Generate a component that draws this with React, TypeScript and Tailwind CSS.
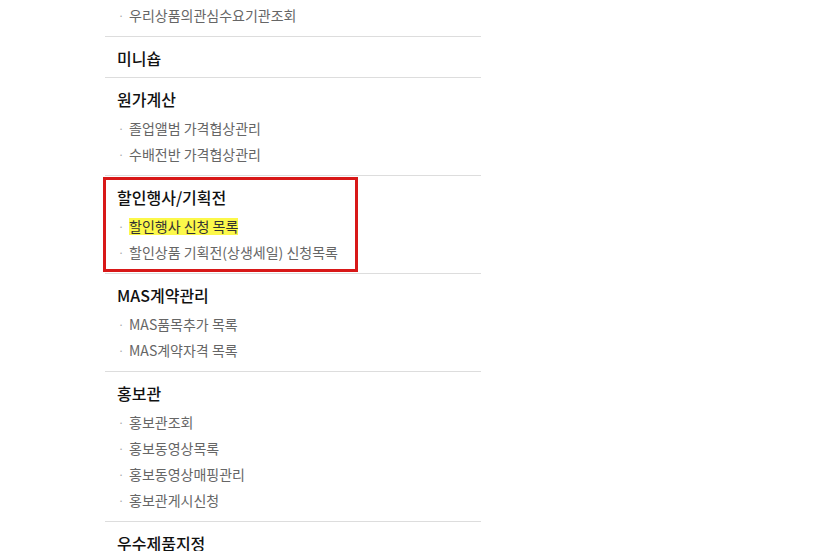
const sections = [
    { title: '미니숍', items: [] as string[] },
    { title: '원가계산', items: ['졸업앨범 가격협상관리', '수배전반 가격협상관리'] },
    { title: '할인행사/기획전', items: ['할인행사 신청 목록', '할인상품 기획전(상생세일) 신청목록'], marked: true },
    { title: 'MAS계약관리', items: ['MAS품목추가 목록', 'MAS계약자격 목록'] },
    { title: '홍보관', items: ['홍보관조회', '홍보동영상목록', '홍보동영상매핑관리', '홍보관게시신청'] },
    { title: '우수제품지정', items: [] as string[] },
]

const Item = ({ label, highlight }: { label: string; highlight?: boolean }) => (
    <li className="flex items-center h-[26px] text-[14px] text-[#666]">
        <span className="w-[12px] pl-[1px] text-[#aaa] text-[11px]">·</span>
        {highlight ? (
            <span className="bg-[#fcf84a] text-[#333] leading-[17px]">{label}</span>
        ) : (
            <span>{label}</span>
        )}
    </li>
)

const App = () => {
    return (
        <div className="bg-white w-[828px] h-[551px] overflow-hidden" style={{ fontFamily: '"Noto Sans CJK KR", "Noto Sans", sans-serif' }}>
            <div className="ml-[105px] w-[376px]">
                <div className="pl-[12px] pt-[2px] pb-[8px]">
                    <ul>
                        <Item label="우리상품의관심수요기관조회" />
                    </ul>
                </div>
                {sections.map((s) => (
                    <div key={s.title} className="relative border-t border-[#ddd] pl-[12px] pt-[10px] pb-[8px]">
                        <h3 className="h-[22px] leading-[22px] text-[16px] font-medium text-[#111]">{s.title}</h3>
                        {s.items.length > 0 && (
                            <ul className="mt-[5px]">
                                {s.items.map((it, i) => (
                                    <Item key={it} label={it} highlight={s.marked && i === 0} />
                                ))}
                            </ul>
                        )}
                        {s.marked && (
                            <div className="absolute left-[-2px] top-[1px] w-[255px] h-[95px] border-[3px] border-[#d81818] pointer-events-none" />
                        )}
                    </div>
                ))}
            </div>
        </div>
    )
}

export default App
